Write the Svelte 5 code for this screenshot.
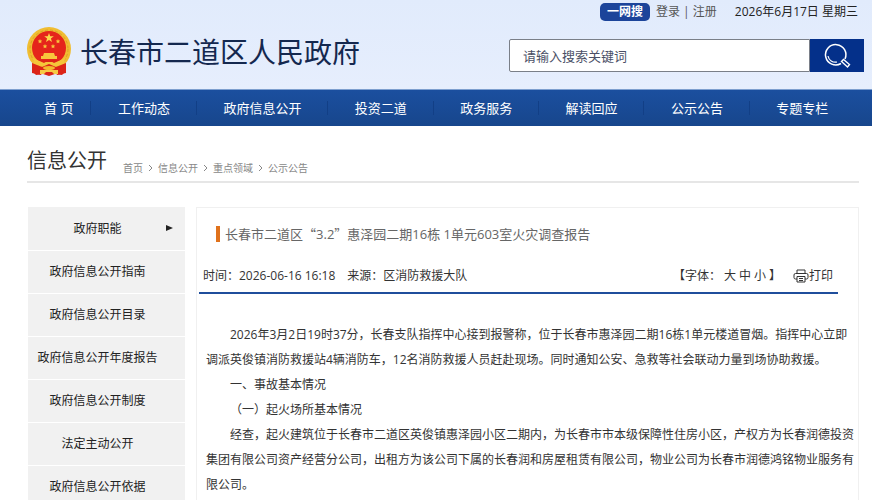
<script>
  let keyword = ''
  let fontSize = 12

  const nav = ['首 页', '工作动态', '政府信息公开', '投资二道', '政务服务', '解读回应', '公示公告', '专题专栏']
  const crumbs = ['首页', '信息公开', '重点领域', '公示公告']
  const menu = [
    '政府职能',
    '政府信息公开指南',
    '政府信息公开目录',
    '政府信息公开年度报告',
    '政府信息公开制度',
    '法定主动公开',
    '政府信息公开依据'
  ]
  const sizes = [
    { name: '大', value: 16 },
    { name: '中', value: 14 },
    { name: '小', value: 12 }
  ]
  const paragraphs = [
    '2026年3月2日19时37分，长春支队指挥中心接到报警称，位于长春市惠泽园二期16栋1单元楼道冒烟。指挥中心立即调派英俊镇消防救援站4辆消防车，12名消防救援人员赶赴现场。同时通知公安、急救等社会联动力量到场协助救援。',
    '一、事故基本情况',
    '（一）起火场所基本情况',
    '经查，起火建筑位于长春市二道区英俊镇惠泽园小区二期内，为长春市市本级保障性住房小区，产权方为长春润德投资集团有限公司资产经营分公司，出租方为该公司下属的长春润和房屋租赁有限公司，物业公司为长春市润德鸿铭物业服务有限公司。'
  ]
</script>

<div class="page" lang="zh-CN">
  <header class="header">
    <div class="topbar">
      <a class="topbar__all" href="#all">一网搜</a>
      <span class="topbar__user"><a href="#login">登录</a> | <a href="#register">注册</a></span>
      <span class="topbar__date">2026年6月17日 星期三</span>
    </div>
    <div class="brand">
      <a class="brand__link" href="#home">
        <svg class="brand__emblem" viewBox="0 0 44 49" width="44" height="49" aria-hidden="true">
          <path d="M6 31 L5 44 L9 48 L16 47 L22 49 L28 47 L35 48 L39 44 L38 31Z" fill="#dc2418" />
          <circle cx="22" cy="22" r="22" fill="#f0bd32" />
          <circle cx="22" cy="22" r="19" fill="none" stroke="#dca024" stroke-width="1" stroke-dasharray="3 2" />
          <circle cx="22" cy="21" r="17" fill="#e5251b" />
          <path d="M22 6l1.200 3.300h3.600l-2.900 2.200 1.100 3.500-3-2.100-3 2.100 1.100-3.500-2.900-2.200h3.600z" fill="#fbd84b" />
          <g fill="#f8c63c">
            <path d="M13 12l.7 1.400 1.500.2-1.100 1.100.3 1.600-1.400-.8-1.400.8.3-1.600-1.100-1.100 1.500-.2z" />
            <path d="M31 12l.7 1.400 1.500.2-1.100 1.100.3 1.600-1.400-.8-1.400.8.3-1.600-1.100-1.100 1.500-.2z" />
            <path d="M18 17l.7 1.400 1.500.2-1.100 1.100.3 1.600-1.400-.8-1.400.8.3-1.600-1.100-1.100 1.500-.2z" />
            <path d="M26 17l.7 1.400 1.500.2-1.100 1.100.3 1.600-1.400-.8-1.400.8.3-1.600-1.100-1.100 1.500-.2z" />
            <path d="M17 26h10l1 3h-12zM14 29h16v3H14z" />
          </g>
          <path d="M6 31 L17 36 L22 33 L27 36 L38 31 L37 37 L28 40 L16 40 L7 37Z" fill="#f5c63a" />
          <path d="M11 33h22l-5 2h-12z" fill="#dc2418" />
          <path d="M5 36 L15 40 L22 37 L29 40 L39 36 L39 46 L30 48 L29 43 L15 43 L14 48 L5 46Z" fill="#dc2418" />
          <path d="M13 43h18v4h-4l-2-2h-6l-2 2h-4z" fill="#f6ca45" />
          <ellipse cx="22" cy="41" rx="6" ry="2" fill="#f3b92d" />
        </svg>
        <span class="brand__name">长春市二道区人民政府</span>
      </a>
      <form class="search" on:submit|preventDefault>
        <input class="search__input" type="text" aria-label="搜索" placeholder="请输入搜索关键词" bind:value={keyword} />
        <button class="search__button" aria-label="搜索">
          <svg viewBox="0 0 28 28" width="28" height="28" fill="none" stroke="#fff" aria-hidden="true">
            <path d="M18 21.500A10.200 10.200 0 1 1 22 17" stroke-width="1.500" />
            <path d="M5 14a7.500 7.500 0 0 0 9 6" stroke-width="1.200" />
            <path d="M18.500 19.500l2-2 6 5-2 2.500z" stroke-width="1.400" />
          </svg>
        </button>
      </form>
    </div>
  </header>

  <nav class="nav">
    <ul class="nav__list">
      {#each nav as item}
        <li class="nav__item"><a href="#nav">{item}</a></li>
      {/each}
    </ul>
  </nav>

  <div class="heading">
    <h2 class="heading__title">信息公开</h2>
    <div class="crumbs">
      {#each crumbs as crumb, i}
        {#if i > 0}
          <svg viewBox="0 0 5 8" width="5" height="8" fill="none" stroke="#888" aria-hidden="true"><path d="M1 1l3 3-3 3" /></svg>
        {/if}
        <a href="#crumb">{crumb}</a>
      {/each}
    </div>
  </div>

  <div class="content">
    <ul class="menu">
      {#each menu as item, i}
        <li class="menu__item">
          <a href="#menu">{item}</a>
          {#if i === 0}
            <svg class="menu__arrow" viewBox="0 0 7 6" width="7" height="6" aria-hidden="true"><path d="M0 0l7 3-7 3z" fill="#222" /></svg>
          {/if}
        </li>
      {/each}
    </ul>

    <main class="article">
      <h1 class="article__title">长春市二道区<span class="quote">“</span>3.2<span class="quote">”</span>惠泽园二期16栋 1单元603室火灾调查报告</h1>
      <div class="meta">
        <span>时间：2026-06-16 16:18</span>
        <span>来源：区消防救援大队</span>
        <span class="meta__sizes">
          【字体：
          {#each sizes as size}
            <button on:click={() => (fontSize = size.value)}>{size.name}</button>
          {/each}
          】
        </span>
        <button class="meta__print" on:click={() => window.print()}>
          <svg viewBox="0 0 16 14" width="16" height="14" fill="none" stroke="#333" aria-hidden="true">
            <path d="M4 4V1h8v3M4 10H2.500Q1 10 1 8.500V6Q1 4.500 2.500 4.500h11Q15 4.500 15 6v2.500Q15 10 13.500 10H12" />
            <path d="M4 7.500h8V13H4zM6 9.500h4M6 11.500h4" />
          </svg>打印
        </button>
      </div>
      <div class="article__body" style="font-size: {fontSize}px">
        {#each paragraphs as text}
          <p>{text}</p>
        {/each}
      </div>
    </main>
  </div>
</div>

<style>
  :global(body) {
    margin: 0;
    background: #fff;
  }

  .page {
    font-family: 'Open Sans', 'Noto Sans CJK SC', sans-serif;
    font-size: 12px;
    color: #333;
  }

  a {
    color: inherit;
    text-decoration: none;
  }

  ul {
    list-style: none;
    margin: 0;
    padding: 0;
  }

  button {
    font: inherit;
    color: inherit;
    padding: 0;
    border: 0;
    background: none;
    cursor: pointer;
  }

  .header {
    background: linear-gradient(#e1ebfc, #e6eefd);
    border-bottom: 1px solid #7d9fcf;
  }

  .topbar {
    display: flex;
    justify-content: flex-end;
    align-items: center;
    height: 24px;
    padding-right: 14px;
    line-height: 18px;
  }

  .topbar__all {
    padding: 0 7px;
    border-radius: 5px;
    background: #1c449a;
    color: #fff;
    font-weight: bold;
  }

  .topbar__user {
    margin: 0 18px 0 6px;
    color: #555;
  }

  .topbar__date {
    color: #222;
  }

  .brand {
    display: flex;
    justify-content: space-between;
    align-items: flex-start;
    height: 65px;
    padding: 0 8px 0 27px;
  }

  .brand__link {
    display: flex;
    align-items: center;
    gap: 9px;
    height: 54px;
  }

  .brand__name {
    font-family: 'Noto Sans CJK SC', sans-serif;
    font-size: 28px;
    line-height: 40px;
    color: #14284f;
  }

  .search {
    display: flex;
    width: 355px;
    height: 33px;
    margin-top: 15px;
  }

  .search__input {
    flex: 1;
    min-width: 0;
    box-sizing: border-box;
    padding: 0 13px;
    border: 1px solid #7a7f88;
    border-radius: 2px 0 0 2px;
    background: #fff;
    font: inherit;
    font-size: 13px;
  }

  .search__input::placeholder {
    color: #4a4f66;
  }

  .search__button {
    display: flex;
    align-items: center;
    justify-content: center;
    width: 54px;
    background: #04308a;
  }

  .nav {
    background: linear-gradient(#1b4f9f, #17468c);
    padding: 0 17px 0 27px;
  }

  .nav__list {
    display: flex;
  }

  .nav__item {
    flex: 1 1 auto;
    padding: 0 24px;
    background: linear-gradient(#123f86, #123f86) right center / 1px 14px no-repeat;
    color: #fff;
    font-size: 13px;
    line-height: 36px;
    text-align: center;
    white-space: nowrap;
  }

  .nav__item:first-child {
    flex: none;
    padding: 0 18px 0 17px;
  }

  .nav__item:last-child {
    background: none;
  }

  .heading {
    display: flex;
    align-items: flex-end;
    gap: 16px;
    margin: 0 13px 0 27px;
    padding: 20px 0 5px;
    border-bottom: 2px solid #e6e6e6;
  }

  .heading__title {
    margin: 0;
    font-size: 20px;
    font-weight: normal;
    line-height: 30px;
  }

  .crumbs {
    display: flex;
    align-items: center;
    gap: 5px;
    color: #888;
    font-size: 10px;
    line-height: 16px;
  }

  .content {
    display: flex;
    align-items: flex-start;
    gap: 11px;
    margin: 24px 13px 0 28px;
  }

  .menu {
    flex: none;
    width: 157px;
  }

  .menu__item {
    position: relative;
    padding-right: 18px;
    background: #f1f1f1;
    border-bottom: 1px solid #fff;
    color: #222;
    line-height: 42px;
    text-align: center;
  }

  .menu__item:first-child {
    line-height: 43px;
  }

  .menu__arrow {
    position: absolute;
    right: 12px;
    top: 18px;
  }

  .article {
    flex: 1;
    min-width: 0;
    border: 1px solid #f0f0f0;
  }

  .article__title {
    margin: 18px 20px 0 19px;
    padding-left: 5px;
    border-left: 4px solid #e0721c;
    color: #666;
    font-size: 13px;
    font-weight: normal;
    line-height: 16px;
  }

  .quote {
    font-family: 'Noto Sans CJK SC', sans-serif;
  }

  .meta {
    display: flex;
    align-items: center;
    gap: 12px;
    margin: 18px 20px 0 2px;
    padding: 0 5px 0 4px;
    border-bottom: 2px solid #1f4e9c;
    line-height: 32px;
  }

  .meta__sizes {
    display: flex;
    gap: 3px;
    margin-left: auto;
  }

  .meta__print {
    display: flex;
    align-items: center;
  }

  .article__body {
    padding: 28px 2px 20px 9px;
    line-height: 25px;
  }

  .article__body p {
    margin: 0;
    text-indent: 2em;
  }
</style>
